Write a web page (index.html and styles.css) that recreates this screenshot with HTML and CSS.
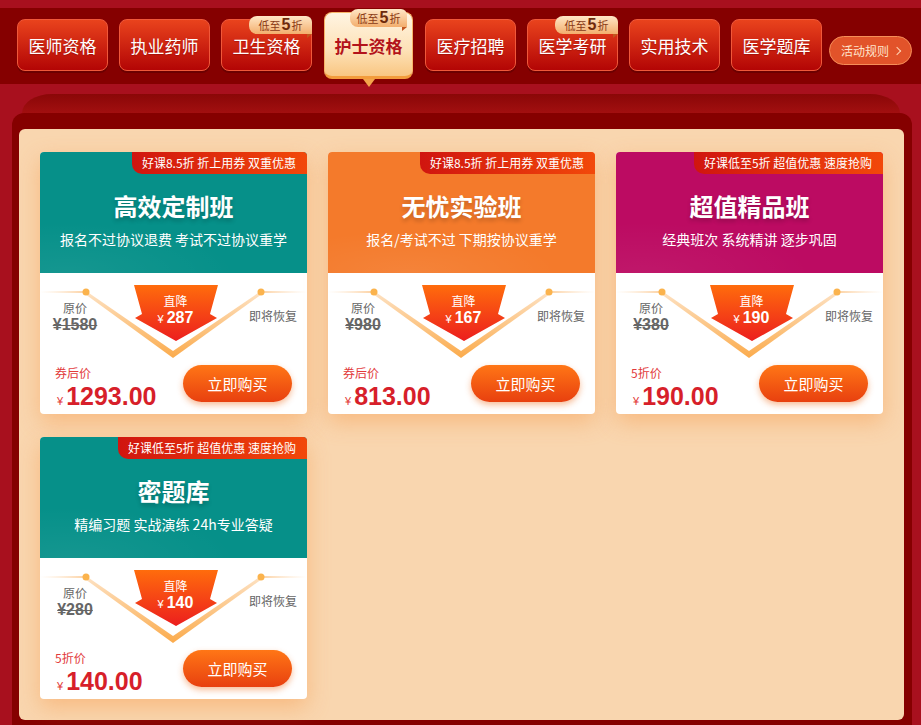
FILE: index.html
```html
<!DOCTYPE html>
<html lang="zh-CN">
<head>
    <meta charset="UTF-8">
    <title>护士资格</title>
    <link rel="stylesheet" href="styles.css">
</head>
<body>
<svg class="defs" width="0" height="0">
    <defs>
        <linearGradient id="fadeL" x1="0" x2="1" y1="0" y2="0">
            <stop offset="0" stop-color="#fde3c6" stop-opacity="0"/>
            <stop offset="1" stop-color="#fcd0a0"/>
        </linearGradient>
        <linearGradient id="fadeR" x1="1" x2="0" y1="0" y2="0">
            <stop offset="0" stop-color="#fde3c6" stop-opacity="0"/>
            <stop offset="1" stop-color="#fcd0a0"/>
        </linearGradient>
        <linearGradient id="vband" x1="0" y1="0" x2="0" y2="1">
            <stop offset="0" stop-color="#fde2c4"/>
            <stop offset="1" stop-color="#fbab4c"/>
        </linearGradient>
        <linearGradient id="arrow" x1="0" y1="0" x2="0" y2="1">
            <stop offset="0" stop-color="#ff6c0c"/>
            <stop offset="1" stop-color="#ec1e1e"/>
        </linearGradient>
    </defs>
</svg>
<div class="top"></div>
<div class="nav">
    <a class="nav-btn">医师资格</a>
    <a class="nav-btn">执业药师</a>
    <a class="nav-btn">卫生资格<span class="tag">低至<b>5</b>折</span></a>
    <a class="nav-btn on">护士资格<span class="tag">低至<b>5</b>折</span></a>
    <a class="nav-btn">医疗招聘</a>
    <a class="nav-btn">医学考研<span class="tag">低至<b>5</b>折</span></a>
    <a class="nav-btn">实用技术</a>
    <a class="nav-btn">医学题库</a>
    <a class="rule">活动规则<i></i></a>
</div>
<div class="gap"></div>
<div class="tab"></div>
<div class="frame">
    <div class="panel">
        <!-- 高效定制班 -->
        <div class="card">
            <div class="card-head teal">
                <span class="badge">好课8.5折 折上用券 双重优惠</span>
                <h2>高效定制班</h2>
                <p>报名不过协议退费 考试不过协议重学</p>
            </div>
            <div class="card-body">
                <svg class="deco" width="267" height="90" viewBox="0 0 267 90">
                    <rect x="0" y="18" width="46" height="2" fill="url(#fadeL)"/>
                    <rect x="221" y="18" width="46" height="2" fill="url(#fadeR)"/>
                    <polygon points="46,18 133,78 133,85 45,21" fill="url(#vband)"/>
                    <polygon points="221,18 222,21 133,85 133,78" fill="url(#vband)"/>
                    <circle cx="46" cy="19" r="3.5" fill="#fbb34d"/>
                    <circle cx="221" cy="19" r="3.5" fill="#fbb34d"/>
                </svg>
                <div class="row-top">
                    <div class="orig"><span>原价</span><s>¥1580</s></div>
                    <div class="drop">
                        <svg width="84" height="56" viewBox="0 0 84 56"><path d="M0,0 L84,0 L76,29 L83,33 L42,56 L1,33 L8,29 Z" fill="url(#arrow)"/></svg>
                        <span>直降</span><b><small>¥</small>287</b>
                    </div>
                    <div class="soon">即将恢复</div>
                </div>
                <div class="row-bot">
                    <div class="now"><span>券后价</span><p><small>¥</small>1293.00</p></div>
                    <a class="buy">立即购买</a>
                </div>
            </div>
        </div>
        <!-- 无忧实验班 -->
        <div class="card">
            <div class="card-head orange">
                <span class="badge">好课8.5折 折上用券 双重优惠</span>
                <h2>无忧实验班</h2>
                <p>报名/考试不过 下期按协议重学</p>
            </div>
            <div class="card-body">
                <svg class="deco" width="267" height="90" viewBox="0 0 267 90">
                    <rect x="0" y="18" width="46" height="2" fill="url(#fadeL)"/>
                    <rect x="221" y="18" width="46" height="2" fill="url(#fadeR)"/>
                    <polygon points="46,18 133,78 133,85 45,21" fill="url(#vband)"/>
                    <polygon points="221,18 222,21 133,85 133,78" fill="url(#vband)"/>
                    <circle cx="46" cy="19" r="3.5" fill="#fbb34d"/>
                    <circle cx="221" cy="19" r="3.5" fill="#fbb34d"/>
                </svg>
                <div class="row-top">
                    <div class="orig"><span>原价</span><s>¥980</s></div>
                    <div class="drop">
                        <svg width="84" height="56" viewBox="0 0 84 56"><path d="M0,0 L84,0 L76,29 L83,33 L42,56 L1,33 L8,29 Z" fill="url(#arrow)"/></svg>
                        <span>直降</span><b><small>¥</small>167</b>
                    </div>
                    <div class="soon">即将恢复</div>
                </div>
                <div class="row-bot">
                    <div class="now"><span>券后价</span><p><small>¥</small>813.00</p></div>
                    <a class="buy">立即购买</a>
                </div>
            </div>
        </div>
        <!-- 超值精品班 -->
        <div class="card">
            <div class="card-head rose">
                <span class="badge">好课低至5折 超值优惠 速度抢购</span>
                <h2>超值精品班</h2>
                <p>经典班次 系统精讲 逐步巩固</p>
            </div>
            <div class="card-body">
                <svg class="deco" width="267" height="90" viewBox="0 0 267 90">
                    <rect x="0" y="18" width="46" height="2" fill="url(#fadeL)"/>
                    <rect x="221" y="18" width="46" height="2" fill="url(#fadeR)"/>
                    <polygon points="46,18 133,78 133,85 45,21" fill="url(#vband)"/>
                    <polygon points="221,18 222,21 133,85 133,78" fill="url(#vband)"/>
                    <circle cx="46" cy="19" r="3.5" fill="#fbb34d"/>
                    <circle cx="221" cy="19" r="3.5" fill="#fbb34d"/>
                </svg>
                <div class="row-top">
                    <div class="orig"><span>原价</span><s>¥380</s></div>
                    <div class="drop">
                        <svg width="84" height="56" viewBox="0 0 84 56"><path d="M0,0 L84,0 L76,29 L83,33 L42,56 L1,33 L8,29 Z" fill="url(#arrow)"/></svg>
                        <span>直降</span><b><small>¥</small>190</b>
                    </div>
                    <div class="soon">即将恢复</div>
                </div>
                <div class="row-bot">
                    <div class="now"><span>5折价</span><p><small>¥</small>190.00</p></div>
                    <a class="buy">立即购买</a>
                </div>
            </div>
        </div>
        <!-- 密题库 -->
        <div class="card">
            <div class="card-head teal">
                <span class="badge">好课低至5折 超值优惠 速度抢购</span>
                <h2>密题库</h2>
                <p>精编习题 实战演练 24h专业答疑</p>
            </div>
            <div class="card-body">
                <svg class="deco" width="267" height="90" viewBox="0 0 267 90">
                    <rect x="0" y="18" width="46" height="2" fill="url(#fadeL)"/>
                    <rect x="221" y="18" width="46" height="2" fill="url(#fadeR)"/>
                    <polygon points="46,18 133,78 133,85 45,21" fill="url(#vband)"/>
                    <polygon points="221,18 222,21 133,85 133,78" fill="url(#vband)"/>
                    <circle cx="46" cy="19" r="3.5" fill="#fbb34d"/>
                    <circle cx="221" cy="19" r="3.5" fill="#fbb34d"/>
                </svg>
                <div class="row-top">
                    <div class="orig"><span>原价</span><s>¥280</s></div>
                    <div class="drop">
                        <svg width="84" height="56" viewBox="0 0 84 56"><path d="M0,0 L84,0 L76,29 L83,33 L42,56 L1,33 L8,29 Z" fill="url(#arrow)"/></svg>
                        <span>直降</span><b><small>¥</small>140</b>
                    </div>
                    <div class="soon">即将恢复</div>
                </div>
                <div class="row-bot">
                    <div class="now"><span>5折价</span><p><small>¥</small>140.00</p></div>
                    <a class="buy">立即购买</a>
                </div>
            </div>
        </div>
    </div>
</div>
</body>
</html>
```

FILE: styles.css
```css
*{
    margin:0;
    padding:0;
    box-sizing: border-box;
}
body{
    background: #a8101e;
    font-family: "Noto Sans CJK SC", "Noto Sans", sans-serif;
    overflow: hidden;
}
.defs{
    position: absolute;
}
.top{
    height: 8px;
}

/* 顶部导航 */
.nav{
    height: 76px;
    background: #850000;
    display: flex;
    align-items: flex-start;
    padding: 11px 0 0 17px;
}
.nav-btn{
    position: relative;
    display: flex;
    align-items: center;
    justify-content: center;
    width: 91px;
    height: 52px;
    margin-right: 11px;
    padding-top: 2px;
    border: 1px solid #f0583a;
    border-radius: 8px;
    background: linear-gradient(#e9431d, #b30505);
    box-shadow: 0 2px 0 #6c0000;
    color: #fff;
    font-size: 17px;
    line-height: 20px;
    text-shadow: 0 1px 1px rgba(120,0,0,.4);
}
.nav-btn.on{
    width: 89px;
    height: 67px;
    margin: -7px 12px 0 1px;
    border: 1px solid #f7b469;
    border-bottom: 3px solid #f39c3c;
    background: linear-gradient(#fff4e2, #fde1b6 60%, #f9c682);
    box-shadow: none;
    color: #b3131b;
    font-weight: bold;
    text-shadow: none;
}
.nav-btn.on:after{
    content: "";
    position: absolute;
    left: 50%;
    bottom: -11px;
    margin-left: -6px;
    border-left: 6px solid transparent;
    border-right: 6px solid transparent;
    border-top: 8px solid #f4a54b;
}
.tag{
    position: absolute;
    top: -4px;
    right: -1px;
    width: 63px;
    height: 18px;
    border-radius: 8px 6px 0 8px;
    background: linear-gradient(#ffe6c6, #f3ae6d);
    color: #8a3a16;
    font-size: 11px;
    font-weight: normal;
    line-height: 18px;
    text-align: center;
    text-shadow: none;
}
.tag b{
    margin: 0 1px;
    color: #6e2a0c;
    font-family: "Liberation Sans", sans-serif;
    font-size: 16px;
    font-weight: bold;
}
.tag:after{
    content: "";
    position: absolute;
    right: 0;
    bottom: -4px;
    border-left: 5px solid #c2561e;
    border-bottom: 4px solid transparent;
}
.on .tag{
    right: 5px;
    width: 57px;
}
.rule{
    display: flex;
    align-items: center;
    justify-content: center;
    gap: 5px;
    width: 83px;
    height: 29px;
    margin: 17px 0 0 -4px;
    border: 1px solid #f68e58;
    border-radius: 15px;
    background: #e2532a;
    color: #ffe3cc;
    font-size: 12px;
}
.rule i{
    width: 6px;
    height: 6px;
    border-top: 1.5px solid #ffd4b4;
    border-right: 1.5px solid #ffd4b4;
    transform: rotate(45deg);
}

/* 外框 */
.gap{
    height: 10px;
}
.tab{
    height: 19px;
    margin: 0 21px 0 22px;
    border-radius: 30px 30px 0 0 / 19px 19px 0 0;
    background: linear-gradient(#8a0707, #a20f10);
}
.frame{
    margin: 0 9px 0 12px;
    padding: 16px 8px 5px 7px;
    border-radius: 12px 12px 0 0;
    background: #850000;
}
.panel{
    display: grid;
    grid-template-columns: repeat(3, 267px);
    gap: 23px 21px;
    padding: 23px 21px 21px;
    border-radius: 6px;
    background: #f9d6af;
}

/* 课程卡片 */
.card{
    height: 262px;
    border-radius: 4px;
    overflow: hidden;
    background: #fff;
    box-shadow: 0 8px 22px rgba(246,150,70,.45);
}
.card-head{
    position: relative;
    height: 121px;
    padding-top: 39px;
    color: #fff;
    text-align: center;
}
.teal{
    background: radial-gradient(ellipse 90% 60% at 10% 100%, rgba(255,255,255,.06), rgba(255,255,255,0) 70%), #069089;
}
.orange{
    background: radial-gradient(ellipse 80% 50% at 30% 100%, rgba(255,255,255,.07), rgba(255,255,255,0) 70%), #f47a2b;
}
.rose{
    background: radial-gradient(ellipse 90% 60% at 10% 100%, rgba(255,255,255,.05), rgba(255,255,255,0) 70%), #bc0b62;
}
.badge{
    position: absolute;
    top: 0;
    right: 0;
    height: 22px;
    padding: 0 11px 0 10px;
    border-radius: 0 0 0 10px;
    background: linear-gradient(90deg, #d0150f, #f2480a);
    font-size: 12px;
    line-height: 22px;
}
.card-head h2{
    font-size: 24px;
    line-height: 30px;
    text-shadow: 0 3px 4px rgba(0,0,0,.2);
}
.card-head p{
    margin-top: 8px;
    font-size: 14px;
    line-height: 20px;
}
.card-body{
    position: relative;
    height: 141px;
    padding-top: 12px;
}
.deco{
    position: absolute;
    top: 0;
    left: 0;
}
.row-top{
    position: relative;
    display: flex;
    justify-content: space-between;
    height: 56px;
}
.orig{
    display: flex;
    flex-direction: column;
    align-items: center;
    width: 50px;
    margin: 15px 0 0 10px;
    color: #666;
}
.orig span{
    font-size: 12px;
    line-height: 16px;
}
.orig s{
    font-family: "Liberation Sans", sans-serif;
    font-size: 16px;
    font-weight: bold;
    line-height: 18px;
}
.drop{
    position: relative;
    display: flex;
    flex-direction: column;
    align-items: center;
    width: 84px;
    margin-left: 12px;
    padding-top: 8px;
    color: #fff;
}
.drop svg{
    position: absolute;
    top: 0;
    left: 0;
}
.drop span{
    position: relative;
    font-size: 12px;
    line-height: 16px;
}
.drop b{
    position: relative;
    font-family: "Liberation Sans", sans-serif;
    font-size: 16px;
    line-height: 18px;
}
.drop small,
.now small{
    margin-right: 3px;
    font-size: 11px;
    font-weight: normal;
}
.soon{
    width: 68px;
    margin-top: 23px;
    padding-right: 10px;
    color: #666;
    font-size: 12px;
    line-height: 16px;
    text-align: right;
}
.row-bot{
    position: relative;
    display: flex;
    justify-content: space-between;
    margin-top: 24px;
    padding: 0 15px;
}
.now span{
    display: block;
    color: #e23a3a;
    font-size: 12px;
    line-height: 16px;
}
.now p{
    padding-left: 2px;
    color: #d71f2a;
    font-family: "Liberation Sans", sans-serif;
    font-size: 25px;
    font-weight: bold;
    line-height: 30px;
}
.now small{
    color: #e23a3a;
}
.buy{
    width: 109px;
    height: 37px;
    border-radius: 19px;
    background: linear-gradient(#ff7616, #e8400f);
    box-shadow: 0 3px 6px rgba(240,110,30,.45);
    color: #fff;
    font-size: 15px;
    line-height: 37px;
    text-align: center;
}
```
